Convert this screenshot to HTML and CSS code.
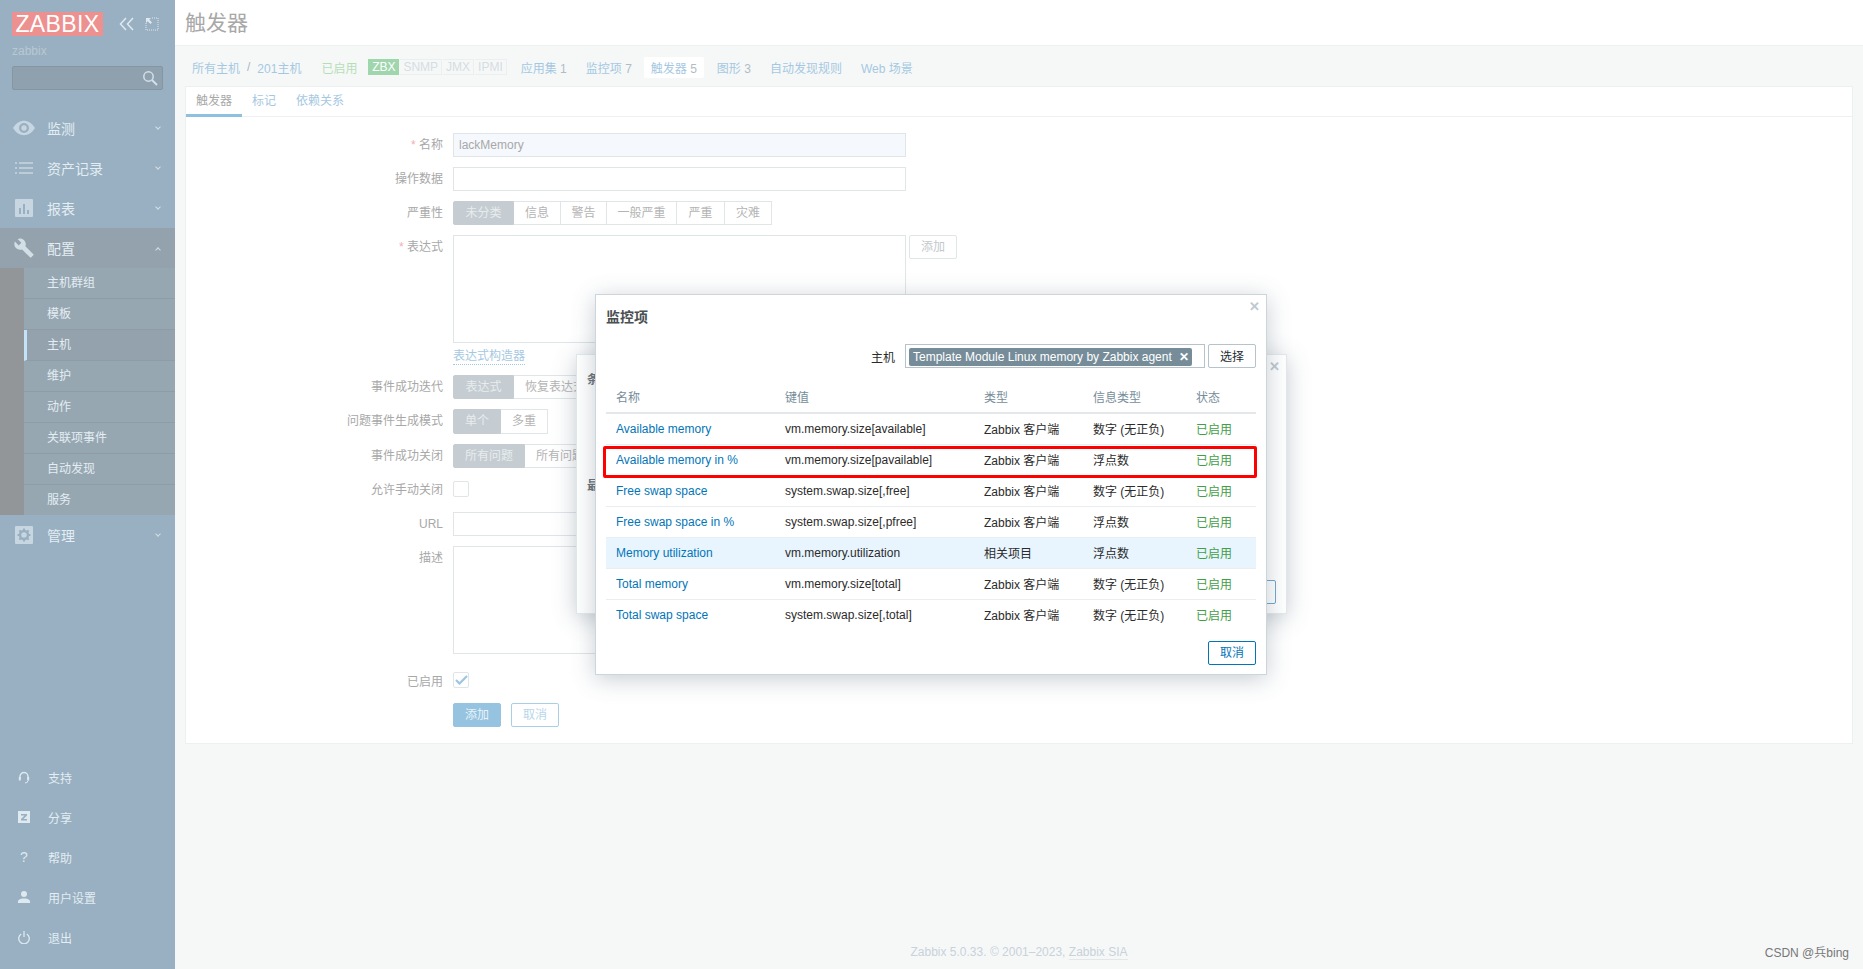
FILE: index.html
```html
<!DOCTYPE html>
<html lang="zh">
<head>
  <meta charset="UTF-8" />
  <title>触发器</title>
  <link rel="stylesheet" href="styles.css">
</head>
<body>
  <div class="page">
    <aside class="sidebar">
      <div class="brand">
        <span class="logo">ZABBIX</span>
        <svg class="brand-icon" width="16" height="14" viewBox="0 0 16 14"><path d="M7 1 1.5 7 7 13M14 1 8.500 7 14 13" fill="none" stroke="#dfe9f0" stroke-width="1.500"/></svg>
        <svg class="brand-icon" width="14" height="14" viewBox="0 0 14 14"><path d="M1 6V13H13V1H6" fill="none" stroke="#dfe9f0" stroke-dasharray="1 1"/><path d="M1 1H6L4.300 2.700 7 5.400 5.400 7 2.700 4.300 1 6Z" fill="#dfe9f0"/></svg>
      </div>
      <div class="server-name">zabbix</div>
      <div class="search">
        <svg width="16" height="16" viewBox="0 0 16 16"><circle cx="6.500" cy="6.500" r="4.700" fill="none" stroke="#d5e0e8" stroke-width="1.500"/><path d="M10 10 15 15" stroke="#d5e0e8" stroke-width="2"/></svg>
      </div>

      <nav class="menu">
        <a class="menu-item">
          <svg class="menu-icon" width="22" height="16" viewBox="0 0 22 16"><path fill-rule="evenodd" d="M0 8C3 3 7 .8 11 .8S19 3 22 8c-3 5-7 7.200-11 7.200S3 13 0 8Zm11-5a5 5 0 1 0 0 10 5 5 0 0 0 0-10Zm0 2.300a2.700 2.700 0 1 1 0 5.400 2.700 2.700 0 0 1 0-5.400Z" fill="#c7d6e0"/></svg>
          <span>监测</span><i class="caret"></i>
        </a>
        <a class="menu-item">
          <svg class="menu-icon" width="18" height="12" viewBox="0 0 18 12"><path d="M0 1H2M4 1H18M0 6H2M4 6H18M0 11H2M4 11H18" stroke="#c7d6e0" stroke-width="1.500"/></svg>
          <span>资产记录</span><i class="caret"></i>
        </a>
        <a class="menu-item">
          <svg class="menu-icon" width="18" height="18" viewBox="0 0 18 18"><rect width="18" height="18" rx="1" fill="#c7d6e0"/><path d="M4 9h2v6H4zM8 5h2v10H8zM12 11h2v4h-2z" fill="#98b0c1"/></svg>
          <span>报表</span><i class="caret"></i>
        </a>
        <a class="menu-item is-open">
          <svg class="menu-icon" width="21" height="21" viewBox="0 0 24 24"><path d="M22.700 19l-9.100-9.100c.9-2.300.4-5-1.500-6.900-2-2-5-2.400-7.400-1.300L9 6 6 9 1.600 4.700C.4 7.100.9 10.100 2.900 12.100c1.900 1.900 4.600 2.400 6.900 1.500l9.100 9.100c.4.400 1 .4 1.400 0l2.300-2.300c.5-.4.5-1.100.1-1.400z" fill="#d3dfe6"/></svg>
          <span>配置</span><i class="caret caret-up"></i>
        </a>
        <div class="submenu">
          <a>主机群组</a>
          <a>模板</a>
          <a class="is-current">主机</a>
          <a>维护</a>
          <a>动作</a>
          <a>关联项事件</a>
          <a>自动发现</a>
          <a>服务</a>
        </div>
        <a class="menu-item">
          <svg class="menu-icon" width="18" height="18" viewBox="0 0 18 18"><rect width="18" height="18" rx="1" fill="#c7d6e0"/><circle cx="9" cy="9" r="4" fill="none" stroke="#98b0c1" stroke-width="2.500"/><path d="M9 2.500V5M9 13v2.500M2.500 9H5M13 9h2.500M4.400 4.400 6.200 6.200M11.800 11.800l1.800 1.800M13.600 4.400 11.800 6.200M6.200 11.800 4.400 13.600" stroke="#98b0c1" stroke-width="2"/></svg>
          <span>管理</span><i class="caret"></i>
        </a>
      </nav>

      <nav class="user-menu">
        <a><svg width="12" height="13" viewBox="0 0 12 13"><path d="M2 8V5.500a4 4 0 0 1 8 0V8" fill="none" stroke="#dfe9f0" stroke-width="1.400"/><path d="M.8 6h2v3.500h-2zM9.200 6h2v3.500h-2z" fill="#dfe9f0"/><path d="M10 9.500Q10 12 7 12" fill="none" stroke="#dfe9f0"/></svg><span>支持</span></a>
        <a><svg width="12" height="12" viewBox="0 0 12 12"><rect width="12" height="12" fill="#dfe9f0"/><path d="M3 3H9V4.500L5.500 8H9V9.500H3V8L6.500 4.500H3Z" fill="#98b0c1"/></svg><span>分享</span></a>
        <a><span class="help-mark">?</span><span>帮助</span></a>
        <a><svg width="12" height="12" viewBox="0 0 12 12"><circle cx="6" cy="3" r="3" fill="#dfe9f0"/><path d="M0 12V10C1 8 3.500 7.500 6 7.500S11 8 12 10V12Z" fill="#dfe9f0"/></svg><span>用户设置</span></a>
        <a><svg width="12" height="13" viewBox="0 0 12 13"><path d="M3.200 3A5.300 5.300 0 1 0 8.800 3" fill="none" stroke="#dfe9f0" stroke-width="1.300"/><path d="M6 0V6" stroke="#dfe9f0" stroke-width="1.300"/></svg><span>退出</span></a>
      </nav>
    </aside>

    <main class="main">
      <header class="page-title">触发器</header>

      <div class="crumbs">
        <a class="crumb-first">所有主机</a>
        <span class="crumb-sep">/</span>
        <a>201主机</a>
        <span class="enabled-text">已启用</span>
        <span class="avail">
          <b class="avail-on">ZBX</b><b>SNMP</b><b>JMX</b><b>IPMI</b>
        </span>
        <a class="crumb-tab first-tab">应用集 <em>1</em></a>
        <a class="crumb-tab tight-tab">监控项 <em>7</em></a>
        <a class="crumb-tab is-active">触发器 <em>5</em></a>
        <a class="crumb-tab">图形 <em>3</em></a>
        <a class="crumb-tab">自动发现规则</a>
        <a class="crumb-tab">Web 场景</a>
      </div>

      <section class="card">
        <div class="tabs">
          <a class="tab is-active">触发器</a>
          <a class="tab">标记</a>
          <a class="tab">依赖关系</a>
        </div>

        <form class="form">
          <label class="required">名称</label>
          <div class="input is-readonly">lackMemory</div>

          <label>操作数据</label>
          <div class="input"></div>

          <label>严重性</label>
          <div class="segs">
            <span class="seg is-on sev-1">未分类</span><span class="seg sev-2">信息</span><span class="seg sev-3">警告</span><span class="seg sev-4">一般严重</span><span class="seg sev-5">严重</span><span class="seg sev-6">灾难</span>
          </div>

          <label class="required">表达式</label>
          <div>
            <div class="expr-row">
              <div class="input textarea"></div>
              <span class="btn-ghost">添加</span>
            </div>
            <a class="dotted-link">表达式构造器</a>
          </div>

          <label>事件成功迭代</label>
          <div class="segs">
            <span class="seg is-on sev-1">表达式</span><span class="seg">恢复表达式</span><span class="seg">无</span>
          </div>

          <label>问题事件生成模式</label>
          <div class="segs seg-tall">
            <span class="seg is-on">单个</span><span class="seg">多重</span>
          </div>

          <label>事件成功关闭</label>
          <div class="segs">
            <span class="seg is-on">所有问题</span><span class="seg">所有问题如果标签值匹配</span>
          </div>

          <label>允许手动关闭</label>
          <div><span class="check check-top"></span></div>

          <label>URL</label>
          <div class="input"></div>

          <label>描述</label>
          <div class="input textarea"></div>

          <label class="row-enabled">已启用</label>
          <div class="row-enabled">
            <span class="check"><svg width="13" height="10" viewBox="0 0 13 10"><path d="M1 5 4.500 8.500 12 1" fill="none" stroke="#9cc6e2" stroke-width="2.200"/></svg></span>
          </div>

          <span></span>
          <div class="actions">
            <span class="btn-add">添加</span>
            <span class="btn-cancel">取消</span>
          </div>
        </form>
      </section>

      <footer class="footer">Zabbix 5.0.33. © 2001–2023, <a>Zabbix SIA</a></footer>
    </main>

    <!-- 后面那层对话框，大部分被挡住 -->
    <div class="dialog dialog-back">
      <span class="dialog-close">✕</span>
      <b class="back-char back-char-1">条</b>
      <b class="back-char back-char-2">最</b>
      <span class="back-input"></span>
      <span class="back-button"></span>
    </div>

    <div class="dialog dialog-front">
      <span class="dialog-close">✕</span>
      <h4 class="dialog-title">监控项</h4>
      <div class="host-row">
        <span class="host-label">主机</span>
        <div class="host-field">
          <span class="host-tag">Template Module Linux memory by Zabbix agent<i>✕</i></span>
        </div>
        <span class="btn-select">选择</span>
      </div>

      <table class="items">
        <colgroup>
          <col class="col-name"><col class="col-key"><col class="col-type"><col class="col-info"><col>
        </colgroup>
        <thead>
          <tr><th>名称</th><th>键值</th><th>类型</th><th>信息类型</th><th>状态</th></tr>
        </thead>
        <tbody>
          <tr><td><a>Available memory</a></td><td>vm.memory.size[available]</td><td>Zabbix 客户端</td><td>数字 (无正负)</td><td class="ok">已启用</td></tr>
          <tr><td><a>Available memory in %</a></td><td>vm.memory.size[pavailable]</td><td>Zabbix 客户端</td><td>浮点数</td><td class="ok">已启用</td></tr>
          <tr><td><a>Free swap space</a></td><td>system.swap.size[,free]</td><td>Zabbix 客户端</td><td>数字 (无正负)</td><td class="ok">已启用</td></tr>
          <tr><td><a>Free swap space in %</a></td><td>system.swap.size[,pfree]</td><td>Zabbix 客户端</td><td>浮点数</td><td class="ok">已启用</td></tr>
          <tr class="is-hover"><td><a>Memory utilization</a></td><td>vm.memory.utilization</td><td>相关项目</td><td>浮点数</td><td class="ok">已启用</td></tr>
          <tr><td><a>Total memory</a></td><td>vm.memory.size[total]</td><td>Zabbix 客户端</td><td>数字 (无正负)</td><td class="ok">已启用</td></tr>
          <tr><td><a>Total swap space</a></td><td>system.swap.size[,total]</td><td>Zabbix 客户端</td><td>数字 (无正负)</td><td class="ok">已启用</td></tr>
        </tbody>
      </table>

      <div class="dialog-foot"><span class="btn-close">取消</span></div>
      <span class="red-box"></span>
    </div>

    <div class="watermark">CSDN @兵bing</div>
  </div>
</body>
</html>
```

FILE: styles.css
```css
* {
  box-sizing: border-box;
}

html, body {
  margin: 0;
  padding: 0;
  height: 969px;
  overflow: hidden;
  background-color: #f6f8f8;
  font-family: "Liberation Sans", "Noto Sans CJK SC", sans-serif;
  font-size: 12px;
}

.page {
  position: relative;
  display: flex;
  height: 969px;
}

/* sidebar */
.sidebar {
  display: flex;
  flex-direction: column;
  width: 175px;
  flex-shrink: 0;
  background-color: #98b0c1;
  color: #e3edf3;
}

.brand {
  display: flex;
  align-items: center;
  padding: 12px 0 0 12px;
  height: 36px;
}

.logo {
  display: block;
  width: 91px;
  height: 24px;
  line-height: 24px;
  text-align: center;
  background-color: #ec9090;
  color: #fff;
  font-size: 23px;
  letter-spacing: 0.4px;
  margin-right: 16px;
}

.brand-icon {
  margin-right: 10px;
}

.server-name {
  margin: 6px 0 0 12px;
  height: 18px;
  line-height: 18px;
  color: #b8c8d3;
}

.search {
  display: flex;
  align-items: center;
  justify-content: flex-end;
  width: 151px;
  height: 24px;
  margin: 6px 0 0 12px;
  padding-right: 4px;
  background-color: #8fa1ae;
  border: 1px solid #8596a3;
  border-radius: 2px;
}

.menu {
  margin-top: 18px;
}

.menu-item {
  display: flex;
  align-items: center;
  position: relative;
  height: 40px;
  padding-left: 47px;
  font-size: 14px;
}

.menu-icon {
  position: absolute;
  left: 24px;
  top: 50%;
  transform: translate(-50%, -50%);
}

.menu-item.is-open {
  background-color: #94a2ad;
}

.caret {
  position: absolute;
  right: 15px;
  top: 17px;
  width: 4px;
  height: 4px;
  border-right: 1px solid #d3dfe6;
  border-bottom: 1px solid #d3dfe6;
  transform: rotate(45deg);
}

.caret-up {
  top: 20px;
  transform: rotate(225deg);
}

.submenu {
  padding-left: 24px;
  background-color: #929699;
}

.submenu a {
  display: block;
  height: 31px;
  line-height: 31px;
  padding-left: 23px;
  background-color: #97a7b2;
  border-bottom: 1px solid #8f9ba5;
}

.submenu a:last-child {
  height: 30px;
  border-bottom: 0;
}

.submenu a.is-current {
  padding-left: 20px;
  border-left: 3px solid #c4e3f8;
  background-color: #94a2ad;
}

.user-menu {
  margin-top: auto;
  margin-bottom: 12px;
}

.user-menu a {
  display: flex;
  align-items: center;
  height: 40px;
}

.user-menu svg,
.help-mark {
  width: 12px;
  margin-left: 18px;
  margin-right: 18px;
  flex-shrink: 0;
}

.help-mark {
  text-align: center;
  font-size: 14px;
  color: #dfe9f0;
}

/* main area */
.main {
  flex: 1;
  display: flex;
  flex-direction: column;
  min-width: 0;
}

.page-title {
  height: 46px;
  padding: 8px 0 0 10px;
  background-color: #fff;
  border-bottom: 1px solid #eef1f2;
  color: #a8a8a8;
  font-size: 21px;
  line-height: 30px;
}

.crumbs {
  display: flex;
  align-items: center;
  height: 40px;
  padding: 2px 0 0 17px;
  color: #a5c8e2;
  white-space: nowrap;
}

.crumb-sep {
  margin: 0 7px;
  color: #a9b6c0;
}

.enabled-text {
  margin-left: 20px;
  color: #b5deb7;
}

.avail {
  display: flex;
  margin-left: 11px;
}

.avail b {
  height: 16px;
  padding: 0 3px;
  margin-right: 1px;
  font-weight: normal;
  color: #d5dde2;
  border: 1px solid #ecefef;
  border-width: 1px 1px 1px 0;
  line-height: 14px;
}

.avail .avail-on {
  width: 31px;
  padding: 0;
  text-align: center;
  background-color: #9fd6ae;
  border: 0;
  line-height: 16px;
  color: #fff;
}

.crumb-tab {
  padding: 2px 7px;
  margin-right: 5px;
}

.crumb-tab em {
  font-style: normal;
  color: #b0bcc5;
}

.crumb-tab.first-tab {
  margin-left: 6px;
}

.crumb-tab.tight-tab {
  margin-right: 3px;
}

.crumb-tab.is-active {
  background-color: #fff;
  border-radius: 2px;
  margin: 0 6px 0 2px;
}

.card {
  height: 658px;
  margin-right: 10px;
  margin-left: 10px;
  background-color: #fff;
  border: 1px solid #edf0f1;
}

.tabs {
  display: flex;
  height: 30px;
  border-bottom: 1px solid #eef1f2;
}

.tab {
  padding: 0 10px;
  line-height: 29px;
  color: #a5c8e2;
}

.tab.is-active {
  color: #a8a8a8;
  border-bottom: 3px solid #8ec0e0;
  height: 30px;
}

/* form */
.form {
  display: grid;
  grid-template-columns: 257px 1fr;
  column-gap: 10px;
  row-gap: 10px;
  padding-top: 16px;
}

.form label {
  display: block;
  text-align: right;
  line-height: 24px;
  color: #a8a8a8;
}

.required::before {
  content: "* ";
  color: #f2b0b0;
}

.input {
  width: 453px;
  height: 24px;
  padding: 0 5px;
  line-height: 22px;
  border: 1px solid #e0e5e8;
  color: #a8a8a8;
}

.input.is-readonly {
  background-color: #f5f8fc;
}

.input.textarea {
  height: 108px;
}

.segs {
  display: flex;
  height: 24px;
}

.segs.seg-tall {
  height: 25px;
}

.seg {
  padding: 0 11px;
  line-height: 22px;
  border: 1px solid #e0e5e8;
  border-left: 0;
  color: #b4b4b4;
  white-space: nowrap;
}

.seg:first-child {
  border-left: 1px solid #e0e5e8;
  border-radius: 2px 0 0 2px;
}

.seg.is-on {
  background-color: #c5cdd2;
  border-color: #c5cdd2;
  color: #e8ecef;
}

.seg.sev-1 { width: 61px; text-align: center; padding: 0; }
.seg.sev-2 { width: 47px; text-align: center; padding: 0; }
.seg.sev-3 { width: 46px; text-align: center; padding: 0; }
.seg.sev-4 { width: 70px; text-align: center; padding: 0; }
.seg.sev-5 { width: 48px; text-align: center; padding: 0; }
.seg.sev-6 { width: 47px; text-align: center; padding: 0; }

.expr-row {
  display: flex;
  align-items: flex-start;
}

.btn-ghost {
  width: 48px;
  height: 24px;
  margin-left: 3px;
  line-height: 22px;
  text-align: center;
  color: #c2c8cc;
  border: 1px solid #e0e5e8;
  border-radius: 2px;
}

.dotted-link {
  display: inline-block;
  height: 17px;
  margin-top: 5px;
  line-height: 16px;
  color: #a5c8e2;
  border-bottom: 1px dotted #a5c8e2;
}

.check {
  display: flex;
  align-items: center;
  justify-content: center;
  width: 16px;
  height: 16px;
  margin-top: 3px;
  border: 1px solid #e0e5e8;
  border-radius: 2px;
}

.check-top {
  margin-top: 3px;
}

.form .row-enabled {
  margin-top: 8px;
  height: 21px;
}

.form label.row-enabled {
  line-height: 21px;
}

.form .row-enabled .check {
  margin-top: 0;
}

.actions {
  display: flex;
  gap: 10px;
}

.btn-add,
.btn-cancel {
  width: 48px;
  height: 24px;
  line-height: 22px;
  text-align: center;
  border-radius: 2px;
}

.btn-add {
  background-color: #95c3e0;
  border: 1px solid #95c3e0;
  color: #e9f3f9;
}

.btn-cancel {
  border: 1px solid #a9cfe6;
  color: #b8d6e9;
}

.footer {
  margin-top: 200px;
  text-align: center;
  color: #c8d2da;
  line-height: 16px;
}

.footer a {
  border-bottom: 1px solid #e2e7ea;
}

/* dialogs */
.dialog {
  position: absolute;
  background-color: #fff;
  border: 1px solid #ccd5da;
  box-shadow: 0 4px 22px rgba(70, 90, 105, 0.3);
}

.dialog-back {
  left: 576px;
  top: 354px;
  width: 711px;
  height: 260px;
  border-color: #e3e8eb;
}

.dialog-front {
  left: 595px;
  top: 294px;
  width: 672px;
  height: 381px;
  padding: 0 10px;
}

.dialog-close {
  position: absolute;
  right: 6px;
  top: 5px;
  color: #c0c9cf;
  font-size: 13px;
  font-weight: bold;
  line-height: 14px;
}

.back-char {
  position: absolute;
  left: 10px;
  color: #6a7278;
}

.back-char-1 { top: 15px; }
.back-char-2 { top: 121px; }

.back-input {
  position: absolute;
  right: 19px;
  top: 84px;
  width: 1px;
  height: 24px;
  background-color: #d9dee1;
}

.back-button {
  position: absolute;
  right: 10px;
  top: 225px;
  width: 40px;
  height: 24px;
  border: 1px solid #6fa8cf;
  border-radius: 2px;
}

.dialog-title {
  margin: 0;
  padding-top: 13px;
  height: 49px;
  line-height: 18px;
  font-size: 14px;
  font-weight: bold;
  color: #4a4f52;
}

.host-row {
  display: flex;
  align-items: center;
  justify-content: flex-end;
  height: 24px;
}

.host-label {
  margin-right: 10px;
  color: #2b2b2b;
}

.host-field {
  width: 300px;
  height: 24px;
  padding: 3px;
  border: 1px solid #b6c3cb;
}

.host-tag {
  display: inline-flex;
  align-items: center;
  height: 18px;
  width: 283px;
  padding-left: 4px;
  background-color: #768d99;
  border-radius: 2px;
  color: #fff;
  white-space: nowrap;
}

.host-tag i {
  margin-left: 7px;
  font-style: normal;
  font-weight: bold;
  font-size: 12px;
}

.btn-select {
  width: 48px;
  height: 24px;
  margin-left: 3px;
  line-height: 24px;
  text-align: center;
  color: #1f2c33;
  border: 1px solid #b6c3cb;
  border-radius: 2px;
}

.items {
  width: 650px;
  margin-top: 13px;
  table-layout: fixed;
  border-collapse: collapse;
  color: #2b2b2b;
}

.col-name { width: 169px; }
.col-key { width: 199px; }
.col-type { width: 109px; }
.col-info { width: 103px; }

.items th {
  height: 32px;
  padding: 0 10px;
  text-align: left;
  font-weight: normal;
  color: #768d99;
  border-bottom: 2px solid #e5e8ea;
}

.items td {
  height: 31px;
  padding: 0 10px;
  border-bottom: 1px solid #ebeef0;
  white-space: nowrap;
}

.items tr:last-child td {
  border-bottom: 0;
}

.items a {
  color: #0275b8;
}

.items .is-hover td {
  background-color: #e8f5ff;
}

.items .ok {
  color: #429e47;
}

.dialog-foot {
  display: flex;
  justify-content: flex-end;
  margin-top: 11px;
}

.btn-close {
  width: 48px;
  height: 24px;
  line-height: 22px;
  text-align: center;
  color: #0275b8;
  border: 1px solid #0275b8;
  border-radius: 2px;
}

.red-box {
  position: absolute;
  left: 7px;
  top: 151px;
  width: 654px;
  height: 32px;
  border: 3px solid #f00;
  border-radius: 2px;
}

.watermark {
  position: absolute;
  right: 14px;
  bottom: 8px;
  color: #777;
  line-height: 16px;
}
```
